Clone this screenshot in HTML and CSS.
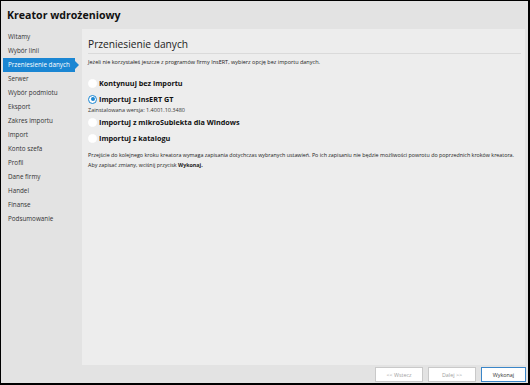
FILE: index.html
```html
<!DOCTYPE html>
<html lang="pl">
<head>
    <meta charset="UTF-8">
    <meta name="viewport" content="width=device-width, initial-scale=1.0">
    <title>Kreator wdrożeniowy</title>
    <link rel="stylesheet" href="styles.css">
</head>
<body>
<div class="window">
    <div class="titlebar">Kreator wdrożeniowy</div>

    <div class="main">
        <ul class="steps">
            <li>Witamy</li>
            <li>Wybór linii</li>
            <li class="active">Przeniesienie danych</li>
            <li>Serwer</li>
            <li>Wybór podmiotu</li>
            <li>Eksport</li>
            <li>Zakres importu</li>
            <li>Import</li>
            <li>Konto szefa</li>
            <li>Profil</li>
            <li>Dane firmy</li>
            <li>Handel</li>
            <li>Finanse</li>
            <li>Podsumowanie</li>
        </ul>

        <div class="panel">
            <h2>Przeniesienie danych</h2>
            <p class="intro">Jeżeli nie korzystałeś jeszcze z programów firmy InsERT, wybierz opcję bez importu danych.</p>

            <div class="options">
                <div class="option"><span class="radio"></span>Kontynuuj bez importu</div>
                <div class="option"><span class="radio checked"></span>Importuj z InsERT GT</div>
                <div class="version">Zainstalowana wersja: 1.4001.10.3480</div>
                <div class="option"><span class="radio"></span>Importuj z mikroSubiekta dla Windows</div>
                <div class="option"><span class="radio"></span>Importuj z katalogu</div>
            </div>

            <p class="note">Przejście do kolejnego kroku kreatora wymaga zapisania dotychczas wybranych ustawień. Po ich zapisaniu nie będzie możliwości powrotu do poprzednich kroków kreatora.<br>
            Aby zapisać zmiany, wciśnij przycisk <b>Wykonaj.</b></p>
        </div>
    </div>

    <div class="footer">
        <button class="btn" disabled>&lt;&lt; Wstecz</button>
        <button class="btn" disabled>Dalej &gt;&gt;</button>
        <button class="btn primary">Wykonaj</button>
    </div>
</div>
</body>
</html>
```

FILE: styles.css
```css
body {
  margin: 0;
  padding: 0;
  font-family: "Open Sans", "Noto Sans", sans-serif;
  color: #222;
  background-color: #e3e3e3;
}

.window {
  box-sizing: border-box;
  width: 530px;
  height: 385px;
  border: 1px solid #000;
  border-right-width: 2px;
  border-bottom-width: 2px;
  background-color: #e3e3e3;
  display: flex;
  flex-direction: column;
}

.titlebar {
  height: 28px;
  padding-left: 6px;
  font-size: 10.6px;
  font-weight: bold;
  line-height: 28px;
  color: #111;
}

.main {
  flex: 1;
  display: flex;
  min-height: 0;
}

/* Step list */
.steps {
  list-style: none;
  margin: 0;
  padding: 1px 0 0 2px;
  width: 79px;
}

.steps li {
  height: 14px;
  line-height: 14px;
  padding-left: 5px;
  font-size: 6.3px;
  color: #333;
  white-space: nowrap;
  position: relative;
}

.steps li.active {
  background-color: #1a86d3;
  color: #fff;
  margin-right: 7px;
}

.steps li.active::after {
  content: "";
  position: absolute;
  right: -4px;
  top: 3px;
  border-top: 4px solid transparent;
  border-bottom: 4px solid transparent;
  border-left: 4px solid #1a86d3;
}

/* Right panel */
.panel {
  flex: 1;
  background-color: #ededed;
  padding: 8px 4px 0 6px;
  margin-right: 3px;
}

.panel h2 {
  margin: 0;
  font-size: 10.2px;
  font-weight: normal;
  line-height: 15px;
  color: #222;
  padding-bottom: 1px;
  border-bottom: 1px solid #dadada;
}

.intro {
  margin: 4px 0 0 0;
  font-size: 5.5px;
  color: #222;
}

.options {
  margin-top: 9px;
}

.option {
  display: flex;
  align-items: center;
  height: 16px;
  font-size: 7.25px;
  font-weight: bold;
  color: #111;
}

.radio {
  box-sizing: border-box;
  width: 9px;
  height: 9px;
  border-radius: 50%;
  background-color: #fff;
  border: 1px solid #fff;
  margin-right: 2px;
  position: relative;
}

.radio.checked {
  border-color: #1a86d3;
}

.radio.checked::after {
  content: "";
  position: absolute;
  left: 1.5px;
  top: 1.5px;
  width: 4px;
  height: 4px;
  border-radius: 50%;
  background-color: #1a86d3;
}

.version {
  font-size: 5.5px;
  color: #333;
  margin-top: -1px;
}

.note {
  margin: 4px 0 0 0;
  font-size: 5.35px;
  line-height: 10px;
  color: #222;
}

/* Footer buttons */
.footer {
  height: 18px;
  display: flex;
  justify-content: flex-end;
  align-items: flex-start;
  gap: 5px;
  padding: 2px 2px 0 0;
  box-sizing: border-box;
}

.btn {
  width: 48px;
  height: 15px;
  padding: 0;
  font-family: inherit;
  font-size: 5.4px;
  background-color: #fff;
  border: 1px solid #c9c9c9;
  color: #a0a0a0;
}

.btn.primary {
  width: 45px;
  border-color: #3b86c8;
  color: #333;
}
```
